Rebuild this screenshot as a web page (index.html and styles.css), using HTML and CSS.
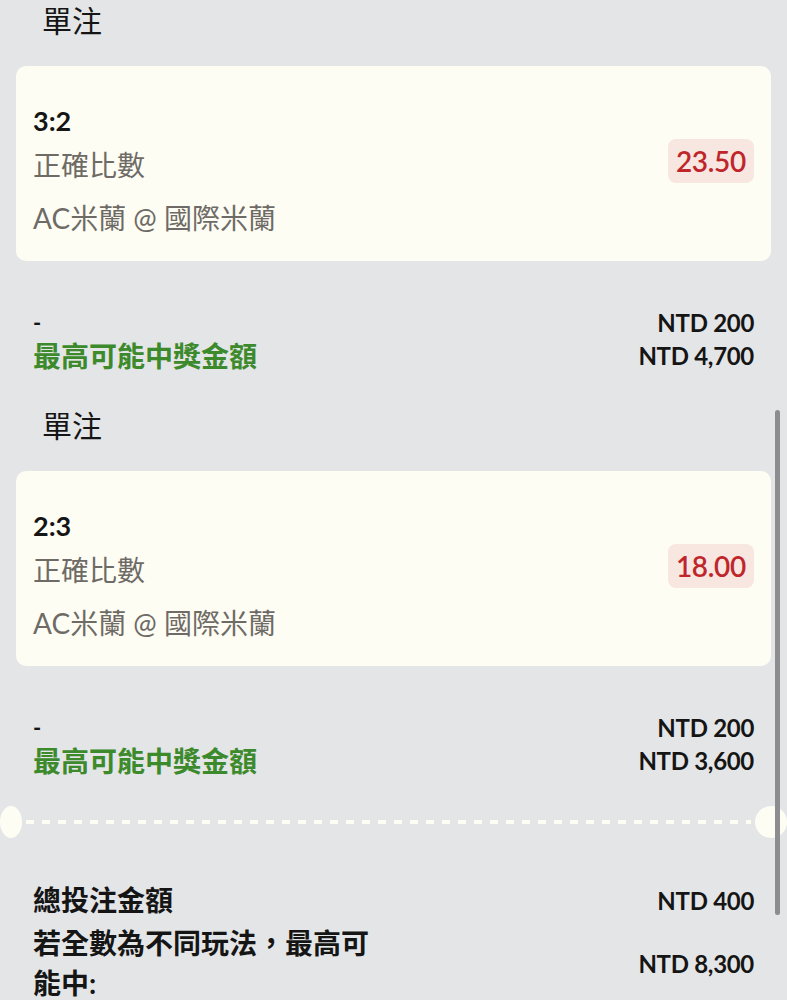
FILE: index.html
```html
<html>
<head>
<title>bet slip</title>
<link rel="stylesheet" href="styles.css">
</head>
<body>
<div class="slip">

<div class="bet">
  <h2 class="bet-type">單注</h2>
  <div class="card">
    <div class="sel">
      <div class="score">3:2</div>
      <div class="market">正確比數</div>
      <div class="match">AC米蘭 @ 國際米蘭</div>
    </div>
    <div class="odds">23.50</div>
  </div>
  <div class="row">
    <span class="dash">-</span>
    <span class="amt">NTD 200</span>
  </div>
  <div class="row row-win">
    <span class="win">最高可能中獎金額</span>
    <span class="amt">NTD 4,700</span>
  </div>
</div>

<div class="bet">
  <h2 class="bet-type">單注</h2>
  <div class="card">
    <div class="sel">
      <div class="score">2:3</div>
      <div class="market">正確比數</div>
      <div class="match">AC米蘭 @ 國際米蘭</div>
    </div>
    <div class="odds">18.00</div>
  </div>
  <div class="row">
    <span class="dash">-</span>
    <span class="amt">NTD 200</span>
  </div>
  <div class="row row-win">
    <span class="win">最高可能中獎金額</span>
    <span class="amt">NTD 3,600</span>
  </div>
</div>

<!-- 撕線 -->
<div class="tear">
  <span class="hole"></span>
  <span class="dashes"></span>
  <span class="hole"></span>
</div>

<div class="total">
  <div class="total-row">
    <span class="total-label">總投注金額</span>
    <span class="amt">NTD 400</span>
  </div>
  <div class="total-row total-max">
    <span class="total-label wrap">若全數為不同玩法，最高可能中:</span>
    <span class="amt">NTD 8,300</span>
  </div>
</div>

<div class="scrollbar"></div>
</div>
</body>
</html>
```

FILE: styles.css
```css
body {
  margin: 0;
  background-color: #e4e5e7;
  font-family: "Lato", "Noto Sans CJK TC", sans-serif;
  color: #151515;
}
.slip {
  position: relative;
  width: 787px;
  height: 1000px;
  overflow: hidden;
}
.bet {
  padding: 0 16px 33px;
}
.bet-type {
  margin: 0;
  padding-left: 26px;
  height: 40px;
  line-height: 40px;
  font-size: 30px;
  font-weight: normal;
}
.card {
  margin-top: 26px;
  height: 195px;
  box-sizing: border-box;
  padding: 39px 17px 0 17px;
  background-color: #fefdf4;
  border-radius: 10px;
  display: flex;
  justify-content: space-between;
  align-items: flex-start;
}
.score {
  font-size: 27px;
  font-weight: bold;
  line-height: 32px;
}
.market {
  margin-top: 8px;
  font-size: 28px;
  line-height: 40px;
  color: #6e6b66;
}
.match {
  margin-top: 13px;
  font-size: 28px;
  line-height: 40px;
  color: #6e6b66;
}
.odds {
  margin-top: 34px;
  height: 44px;
  line-height: 44px;
  padding: 0 8px;
  border-radius: 8px;
  background-color: #f8e7e1;
  color: #bf262c;
  font-size: 28px;
  font-weight: 600;
  letter-spacing: -0.3px;
}
.row {
  display: flex;
  justify-content: space-between;
  align-items: center;
  margin-top: 45px;
  padding: 0 17px;
  height: 32px;
}
.row-win {
  margin-top: 0;
  height: 34px;
}
.dash {
  font-size: 22px;
  font-weight: bold;
}
.win {
  font-size: 28px;
  font-weight: bold;
  color: #3c8a2c;
}
.amt {
  font-size: 24px;
  font-weight: bold;
  letter-spacing: -0.3px;
}
.tear {
  display: flex;
  align-items: center;
  height: 24px;
}
.hole {
  flex: none;
  width: 22px;
  height: 32px;
  border-radius: 50%;
  background-color: #fefdf4;
}
.hole:last-child {
  width: 32px;
}
.dashes {
  flex: 1;
  height: 4px;
  margin: 0 4px;
  background-image: linear-gradient(to right, #fefdf4 0 8px, transparent 8px 16px);
  background-size: 16px 4px;
}
.total {
  margin-top: 46px;
  padding: 0 33px;
}
.total-row {
  display: flex;
  justify-content: space-between;
  align-items: center;
  height: 40px;
}
.total-max {
  margin-top: 3px;
  height: 80px;
}
.total-label {
  font-size: 28px;
  font-weight: bold;
  line-height: 40px;
}
.wrap {
  width: 350px;
}
.scrollbar {
  position: absolute;
  top: 410px;
  right: 7px;
  width: 5px;
  height: 505px;
  border-radius: 3px;
  background-color: #8d8d8f;
}
```
